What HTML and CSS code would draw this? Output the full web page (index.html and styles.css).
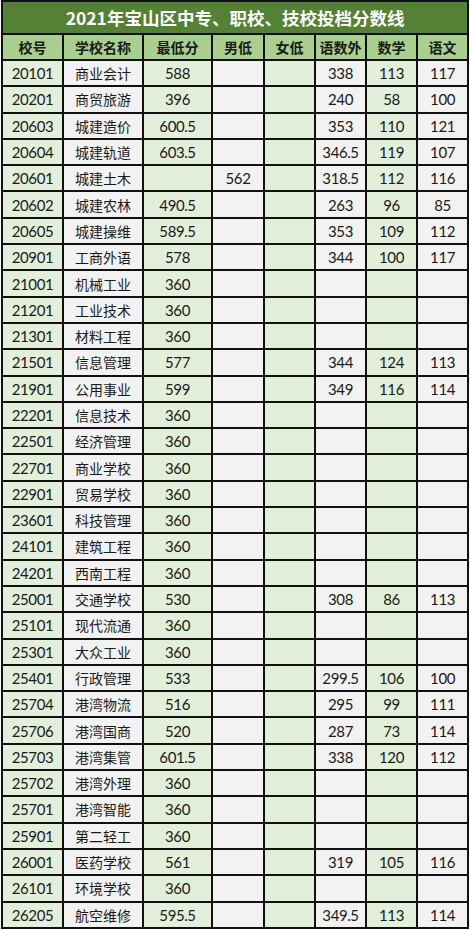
FILE: index.html
```html
<!DOCTYPE html>
<html lang="zh">
<head>
<meta charset="utf-8">
<link rel="stylesheet" href="styles.css">
</head>
<body>
<div class="wrap">
<table class="score">
<colgroup>
<col class="c1"><col class="c2"><col class="c3"><col class="c4"><col class="c5"><col class="c6"><col class="c7"><col class="c8">
</colgroup>
<thead>
<tr class="title"><th colspan="8">2021年宝山区中专、职校、技校投档分数线</th></tr>
<tr class="head"><th>校号</th><th>学校名称</th><th>最低分</th><th>男低</th><th>女低</th><th>语数外</th><th>数学</th><th>语文</th></tr>
</thead>
<tbody>
<tr><td>20101</td><td>商业会计</td><td>588</td><td></td><td></td><td>338</td><td>113</td><td>117</td></tr>
<tr><td>20201</td><td>商贸旅游</td><td>396</td><td></td><td></td><td>240</td><td>58</td><td>100</td></tr>
<tr><td>20603</td><td>城建造价</td><td>600.5</td><td></td><td></td><td>353</td><td>110</td><td>121</td></tr>
<tr><td>20604</td><td>城建轨道</td><td>603.5</td><td></td><td></td><td>346.5</td><td>119</td><td>107</td></tr>
<tr><td>20601</td><td>城建土木</td><td></td><td>562</td><td></td><td>318.5</td><td>112</td><td>116</td></tr>
<tr><td>20602</td><td>城建农林</td><td>490.5</td><td></td><td></td><td>263</td><td>96</td><td>85</td></tr>
<tr><td>20605</td><td>城建操维</td><td>589.5</td><td></td><td></td><td>353</td><td>109</td><td>112</td></tr>
<tr><td>20901</td><td>工商外语</td><td>578</td><td></td><td></td><td>344</td><td>100</td><td>117</td></tr>
<tr><td>21001</td><td>机械工业</td><td>360</td><td></td><td></td><td></td><td></td><td></td></tr>
<tr><td>21201</td><td>工业技术</td><td>360</td><td></td><td></td><td></td><td></td><td></td></tr>
<tr><td>21301</td><td>材料工程</td><td>360</td><td></td><td></td><td></td><td></td><td></td></tr>
<tr><td>21501</td><td>信息管理</td><td>577</td><td></td><td></td><td>344</td><td>124</td><td>113</td></tr>
<tr><td>21901</td><td>公用事业</td><td>599</td><td></td><td></td><td>349</td><td>116</td><td>114</td></tr>
<tr><td>22201</td><td>信息技术</td><td>360</td><td></td><td></td><td></td><td></td><td></td></tr>
<tr><td>22501</td><td>经济管理</td><td>360</td><td></td><td></td><td></td><td></td><td></td></tr>
<tr><td>22701</td><td>商业学校</td><td>360</td><td></td><td></td><td></td><td></td><td></td></tr>
<tr><td>22901</td><td>贸易学校</td><td>360</td><td></td><td></td><td></td><td></td><td></td></tr>
<tr><td>23601</td><td>科技管理</td><td>360</td><td></td><td></td><td></td><td></td><td></td></tr>
<tr><td>24101</td><td>建筑工程</td><td>360</td><td></td><td></td><td></td><td></td><td></td></tr>
<tr><td>24201</td><td>西南工程</td><td>360</td><td></td><td></td><td></td><td></td><td></td></tr>
<tr><td>25001</td><td>交通学校</td><td>530</td><td></td><td></td><td>308</td><td>86</td><td>113</td></tr>
<tr><td>25101</td><td>现代流通</td><td>360</td><td></td><td></td><td></td><td></td><td></td></tr>
<tr><td>25301</td><td>大众工业</td><td>360</td><td></td><td></td><td></td><td></td><td></td></tr>
<tr><td>25401</td><td>行政管理</td><td>533</td><td></td><td></td><td>299.5</td><td>106</td><td>100</td></tr>
<tr><td>25704</td><td>港湾物流</td><td>516</td><td></td><td></td><td>295</td><td>99</td><td>111</td></tr>
<tr><td>25706</td><td>港湾国商</td><td>520</td><td></td><td></td><td>287</td><td>73</td><td>114</td></tr>
<tr><td>25703</td><td>港湾集管</td><td>601.5</td><td></td><td></td><td>338</td><td>120</td><td>112</td></tr>
<tr><td>25702</td><td>港湾外理</td><td>360</td><td></td><td></td><td></td><td></td><td></td></tr>
<tr><td>25701</td><td>港湾智能</td><td>360</td><td></td><td></td><td></td><td></td><td></td></tr>
<tr><td>25901</td><td>第二轻工</td><td>360</td><td></td><td></td><td></td><td></td><td></td></tr>
<tr><td>26001</td><td>医药学校</td><td>561</td><td></td><td></td><td>319</td><td>105</td><td>116</td></tr>
<tr><td>26101</td><td>环境学校</td><td>360</td><td></td><td></td><td></td><td></td><td></td></tr>
<tr><td>26205</td><td>航空维修</td><td>595.5</td><td></td><td></td><td>349.5</td><td>113</td><td>114</td></tr>
</tbody>
</table>
</div>
</body>
</html>
```
FILE: styles.css
```css
html, body {
  margin: 0;
  padding: 0;
  background: #ffffff;
}
.wrap {
  padding-left: 1px;
}
.score {
  border-collapse: collapse;
  table-layout: fixed;
  width: 467px;
  font-family: Lato, "Noto Sans CJK SC", sans-serif;
  color: #1a1a1a;
}
.c1 { width: 61px; }
.c2 { width: 80px; }
.c3 { width: 69px; }
.c4 { width: 52px; }
.c5 { width: 51px; }
.c6 { width: 51px; }
.c7 { width: 51px; }
.c8 { width: 51px; }
.score th, .score td {
  border: 2px solid #111;
  padding: 0;
  text-align: center;
  white-space: nowrap;
  overflow: hidden;
}
.title th {
  height: 31px;
  background: #548235;
  color: #ffffff;
  font-family: "Noto Sans CJK SC", sans-serif;
  font-weight: 700;
  font-size: 17.5px;
  letter-spacing: 0;
}
.head th {
  height: 24px;
  background: #a9d08e;
  color: #1a1a1a;
  font-family: "Noto Sans CJK SC", sans-serif;
  font-weight: 700;
  font-size: 14px;
}
.score tbody td {
  height: 24.3px;
  font-size: 15px;
  letter-spacing: -0.4px;
  background: #f2f2f2;
}
.score tbody td:nth-child(2) {
  font-family: "Noto Sans CJK SC", sans-serif;
  font-size: 14px;
  letter-spacing: 0;
}
.score tbody td:nth-child(odd) {
  background: #e2efda;
}
```
